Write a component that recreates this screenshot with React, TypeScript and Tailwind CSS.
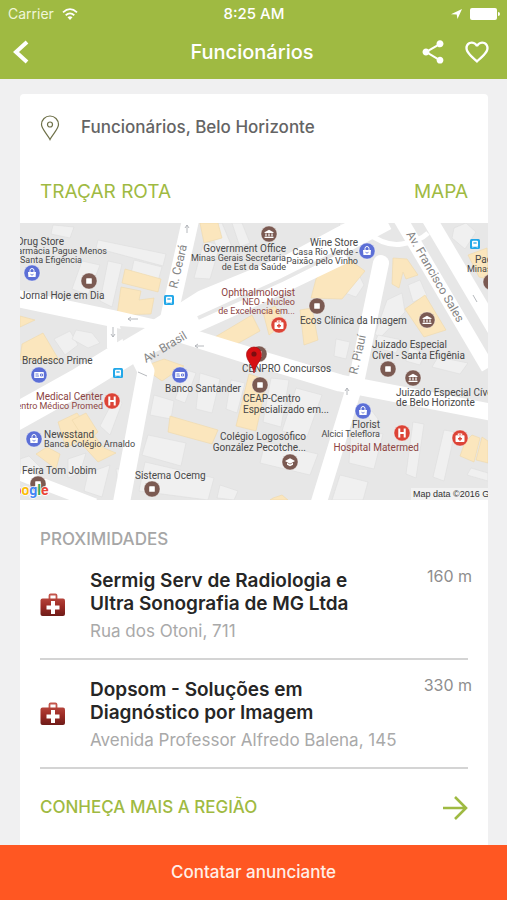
import React from "react";
import { MdShare, MdFavoriteBorder } from "react-icons/md";

type Kind = "bag" | "card" | "square" | "civic" | "school" | "medical" | "hospital";

const PIN_COLOR: Record<Kind, string> = {
  bag: "#5c6fd6",
  card: "#5c6fd6",
  square: "#7b5a52",
  civic: "#7b5a52",
  school: "#7b5a52",
  medical: "#dc4437",
  hospital: "#dc4437",
};

const MARKERS: [number, number, Kind][] = [
  [12, 50, "bag"],
  [347, 28, "bag"],
  [14, 216, "bag"],
  [343, 188, "bag"],
  [160, 152, "card"],
  [19, 152, "card"],
  [69, 58, "square"],
  [297, 83, "square"],
  [240, 162, "square"],
  [368, 146, "square"],
  [132, 266, "square"],
  [239, 131, "square"],
  [18, 261, "square"],
  [249, 11, "civic"],
  [407, 97, "civic"],
  [393, 155, "civic"],
  [471, 59, "square"],
  [270, 239, "school"],
  [259, 102, "medical"],
  [440, 215, "medical"],
  [92, 178, "hospital"],
  [382, 210, "hospital"],
];

const TRANSIT: [number, number][] = [
  [149, 77],
  [98, 150],
  [455, 21],
];

type Anchor = "start" | "middle" | "end";
const LABELS: [string, number, number, 9 | 10, Anchor, ("red" | "dark")?][] = [
  ["Drug Store", -3, 22, 10, "start"],
  ["Farmácia Pague Menos", 87, 31, 9, "end"],
  ["Santa Efigência", 0, 40, 9, "start"],
  ["Jornal Hoje em Dia", 0, 76, 10, "start"],
  ["Government Office", 266, 29, 10, "end"],
  ["Minas Gerais Secretaria", 266, 38, 9, "end"],
  ["de Est da Saúde", 266, 47, 9, "end"],
  ["Wine Store", 338, 23, 10, "end"],
  ["Casa Rio Verde -", 338, 32, 9, "end"],
  ["Paixão pelo Vinho", 338, 41, 9, "end"],
  ["Ophthalmologist", 275, 73, 10, "end", "red"],
  ["NEO - Nucleo", 275, 82, 9, "end", "red"],
  ["de Excelencia em...", 275, 91, 9, "end", "red"],
  ["Ecos Clínica da Imagem", 280, 101, 10, "start"],
  ["Padaria", 455, 40, 10, "start"],
  ["Minas", 447, 49, 9, "start"],
  ["Juizado Especial", 352, 125, 10, "start"],
  ["Cível - Santa Efigênia", 352, 136, 10, "start"],
  ["Juizado Especial Cível", 376, 173, 10, "start"],
  ["de Belo Horizonte", 376, 183, 10, "start"],
  ["Bradesco Prime", 2, 141, 10, "start"],
  ["Medical Center", 83, 177, 10, "end", "red"],
  ["Centro Médico Promed", 83, 186, 9, "end", "red"],
  ["Newsstand", 24, 215, 10, "start"],
  ["Banca Colégio Arnaldo", 24, 224, 9, "start"],
  ["Feira Tom Jobim", 2, 251, 10, "start"],
  ["Sistema Ocemg", 115, 256, 10, "start"],
  ["Banco Santander", 221, 169, 10, "end"],
  ["CENPRO Concursos", 222, 149, 10, "start"],
  ["CEAP-Centro", 223, 179, 10, "start"],
  ["Especializado em...", 223, 190, 10, "start"],
  ["Colégio Logosófico", 286, 217, 10, "end"],
  ["González Pecotche...", 286, 228, 10, "end"],
  ["Florist", 360, 205, 10, "end"],
  ["Alcici Teleflora", 360, 214, 9, "end"],
  ["Hospital Matermed", 399, 228, 10, "end", "red"],
];

const GREY_BLOCKS = [
  "33,2 54,4 50,15 31,11",
  "78,17 146,31 143,43 76,25",
  "114,37 142,44 138,58 111,51",
  "62,38 80,42 68,72 52,66",
  "88,38 102,41 92,84 80,78",
  "34,116 50,108 58,122 45,132",
  "56,107 72,110 80,120 68,125 52,116",
  "174,55 184,18 200,22 190,56",
  "188,2 202,0 212,24 198,28",
  "212,0 222,0 230,20 220,24",
  "320,0 332,0 326,14 318,10",
  "325,55 338,50 344,62 336,74 325,70",
  "388,62 400,57 407,73 393,79",
  "367,77 382,70 385,89 360,115 355,111",
  "434,5 446,0 456,9 445,26 432,15",
  "316,116 330,119 326,136 314,133",
  "358,112 382,117 376,130 353,124",
  "166,147 176,150 165,180 155,176",
  "180,150 200,156 192,190 176,186",
  "211,157 225,160 217,190 206,186",
  "251,155 269,157 261,204 243,199",
  "276,165 302,172 287,214 262,208",
  "134,172 154,178 151,196 130,192",
  "128,212 166,220 161,243 122,232",
  "96,246 112,246 108,262 98,260",
  "125,239 194,255 188,277 119,268",
  "80,203 96,172 102,180 90,212",
  "68,250 90,242 82,274 64,268",
  "48,236 66,230 60,250 48,255",
  "245,219 298,231 290,252 240,240",
  "331,205 363,211 354,246 329,240",
  "346,190 352,188 358,196 355,204",
  "393,199 404,201 396,255 386,251",
  "424,207 435,209 424,258 413,254",
  "451,245 468,250 468,258 447,252",
  "0,236 9,233 22,246 8,262 0,258",
  "418,134 448,140 440,151 412,144",
  "389,124 405,130 400,142 386,138",
  "320,252 348,259 343,277 312,277",
  "200,262 218,268 214,277 197,275",
];

const SAND_BLOCKS = [
  "105,46 141,56 138,69 102,60",
  "101,64 121,68 119,77 134,75 131,91 97,92",
  "0,93 15,97 0,104",
  "2,121 23,110 39,137 0,137",
  "180,0 198,0 202,15 184,20",
  "195,114 232,92 240,108 215,122",
  "296,56 317,28 345,48 322,76 291,75",
  "243,89 255,83 265,100 249,112",
  "373,35 387,36 398,52 386,56 383,49 379,65 372,61",
  "385,86 405,72 426,107 404,114",
  "448,32 467,25 468,56 459,54",
  "280,87 292,85 298,117 284,122",
  "38,199 57,190 84,225 96,230 78,239 59,218 46,225",
  "27,224 40,231 36,246 16,231",
  "150,193 198,207 192,221 148,209",
  "229,151 247,157 236,208 216,203",
  "122,144 144,136 164,143 142,158",
  "445,219 452,212 460,215 454,239 440,233",
  "462,214 468,218 468,240 456,237",
  "253,275 262,272 268,277 250,277",
  "52,197 66,190 78,209 66,219",
];

function Marker({ x, y, kind }: { x: number; y: number; kind: Kind }) {
  const color = PIN_COLOR[kind];
  return (
    <g transform={`translate(${x} ${y})`}>
      <circle r="8" fill={color} stroke="#fff" strokeOpacity=".5" strokeWidth=".7" />
      {kind === "square" && <rect x="-2.8" y="-2.8" width="5.6" height="5.6" rx=".6" fill="#fff" />}
      {kind === "bag" && (
        <g fill="none" stroke="#fff">
          <path d="M-4-1H4L3.6 4H-3.6Z" fill="#fff" stroke="none" />
          <path d="M-2-1V-2.5A2 2 0 0 1 2-2.5V-1" strokeWidth="1" />
          <path d="M-1.5 1.3Q0 3 1.5 1.3" stroke={color} strokeWidth=".9" />
        </g>
      )}
      {kind === "card" && (
        <g>
          <rect x="-4.8" y="-3" width="9.6" height="6" rx=".6" fill="#fff" />
          <path d="M-3.5-1H-.5M-3.5 1H0M1.5-1H3.5V1H1.5Z" stroke={color} strokeWidth=".9" fill="none" />
        </g>
      )}
      {kind === "civic" && (
        <path
          d="M-4.5-1.8 0-4.3 4.5-1.8V-1H-4.5ZM-3.6-.5H-2.4V2.3H-3.6ZM-.6-.5H.6V2.3H-.6ZM2.4-.5H3.6V2.3H2.4ZM-4.5 2.8H4.5V4H-4.5Z"
          fill="#fff"
        />
      )}
      {kind === "school" && <path d="M-5-1 0-3.7 5-1 0 1.7ZM-3 .8 0 2.5 3 .8V2.8L0 4.3-3 2.8Z" fill="#fff" />}
      {kind === "medical" && (
        <g>
          <path d="M-1.7-2.7V-4H1.7V-2.7" fill="none" stroke="#fff" strokeWidth="1.1" />
          <rect x="-4.5" y="-2.8" width="9" height="6.8" rx=".8" fill="#fff" />
          <path d="M0-1.3V2.7M-2 .7H2" stroke={color} strokeWidth="1.4" />
        </g>
      )}
      {kind === "hospital" && <path d="M-2.7-4.5V4.5M2.7-4.5V4.5M-2.7 0H2.7" stroke="#fff" strokeWidth="2" />}
    </g>
  );
}

function RegionMap() {
  return (
    <svg
      viewBox="0 0 468 277"
      preserveAspectRatio="xMidYMid slice"
      className="block w-full overflow-hidden font-[Roboto,sans-serif]"
      role="img"
      aria-label="Mapa de Funcionários, Belo Horizonte"
    >
      <rect width="468" height="277" fill="#e7e7e7" />
      <g fill="#f0f0f0" stroke="#dedede" strokeWidth=".6">
        {GREY_BLOCKS.map((points) => (
          <polygon key={points} points={points} />
        ))}
      </g>
      <g fill="#fbe6bd" stroke="#efd9ab" strokeWidth=".6">
        {SAND_BLOCKS.map((points) => (
          <polygon key={points} points={points} />
        ))}
      </g>
      <g fill="none" stroke="#fff" strokeLinejoin="round">
        <path d="M-5 75 95 96 160 111 240 136 320 160 475 190" strokeWidth="17" />
        <path d="M-10 197 60 158 125 118 185 80 270 45 320 18 365-6" strokeWidth="27" />
        <path d="M110 130 170 102 250 66 325 30" strokeWidth="20" />
        <path d="M171-5 148 98" strokeWidth="17" />
        <path d="M92 90V125" strokeWidth="10" />
        <path d="M118 132 126 148 101 282" strokeWidth="17" />
        <path d="M361 40 337 155 298 282" strokeWidth="16" strokeLinecap="round" />
        <path d="M378-8 468 145" strokeWidth="14" />
        <path d="M407-8 475 107" strokeWidth="15" />
        <path d="M345 8Q365 24 382 21 400 18 408 10" strokeWidth="5" />
        <path d="M0 252 75 281" strokeWidth="11" />
      </g>
      <path d="M178 95 262 57 322 27" fill="none" stroke="#e7e7e7" strokeWidth="4" />
      <polygon points="100,103 125,105 103,118" fill="#e7e7e7" />
      <g fill="none" stroke="#aeb1b6" strokeWidth=".9">
        <path d="M118 96H108M111 94 108 96 111 98M93 104V114M91 111 93 114 95 111M184 123H175M178 121 175 123 178 125" />
        <path d="M167 10V2M165 5 167 2 169 5M327 172V165M325 168 327 165 329 168M453 72 457 79M118 149 127 153" />
      </g>

      <g fontSize="12" fill="#858585">
        <text transform="translate(157 66) rotate(-77)">R. Ceará</text>
        <text transform="translate(126 140) rotate(-31)">Av. Brasil</text>
        <text transform="translate(337 152) rotate(-77)">R. Piauí</text>
        <text transform="translate(386 11) rotate(60)">Av. Francisco Sales</text>
      </g>

      {TRANSIT.map(([x, y]) => (
        <g key={`${x}-${y}`} transform={`translate(${x} ${y})`}>
          <rect x="-5" y="-5" width="10" height="10" rx="1.5" fill="#22a7e8" />
          <rect x="-3" y="-3.3" width="6" height="6" rx="1" fill="#fff" />
          <path d="M-2-2H2V0H-2ZM-2.2 2.5V3.8M2.2 2.5V3.8" fill="#22a7e8" stroke="#fff" strokeWidth=".7" />
        </g>
      ))}
      {MARKERS.map(([x, y, kind]) => (
        <Marker key={`${x}-${y}`} x={x} y={y} kind={kind} />
      ))}
      {LABELS.map(([text, x, y, size, anchor, tone]) => (
        <text
          key={text}
          x={x}
          y={y}
          fontSize={size}
          textAnchor={anchor}
          fill={tone === "red" ? "#8d4543" : "#484848"}
        >
          {text}
        </text>
      ))}

      <path
        d="M234 150C233 142 226.500 138 226.500 131.500A7.500 7.500 0 0 1 241.500 131.500C241.500 138 235 142 234 150Z"
        fill="#d60f12"
        stroke="#a80c0e"
        strokeWidth=".7"
      />
      <circle cx="234" cy="131" r="2.600" fill="#7c0d10" />

      <text x="-16" y="272" fontSize="14" fontWeight="700" stroke="#fff" strokeWidth="1.500" paintOrder="stroke">
        <tspan fill="#4285f4">G</tspan>
        <tspan fill="#ea4335">o</tspan>
        <tspan fill="#fbbc05">o</tspan>
        <tspan fill="#4285f4">g</tspan>
        <tspan fill="#34a853">l</tspan>
        <tspan fill="#ea4335">e</tspan>
      </text>
      <rect x="391" y="265" width="77" height="12" fill="#f5f5f5" fillOpacity=".8" />
      <text x="393" y="274" fontSize="9" fill="#333" className="font-[Liberation_Sans,sans-serif]">
        Map data ©2016 Google
      </text>
    </svg>
  );
}

function FirstAidIcon() {
  return (
    <svg viewBox="0 0 26 24" className="h-6 w-[26px]" aria-hidden="true">
      <defs>
        <linearGradient id="case-red" x1="0" y1="0" x2="0" y2="1">
          <stop offset="0" stopColor="#b5433a" />
          <stop offset=".45" stopColor="#9c2b25" />
          <stop offset="1" stopColor="#6e1c19" />
        </linearGradient>
      </defs>
      <path d="M9.500 6V2.600Q9.500 1.500 10.600 1.500H15.400Q16.500 1.500 16.500 2.600V6" fill="none" stroke="#c4564c" strokeWidth="1.800" />
      <rect x=".5" y="5.500" width="24.500" height="17.500" rx="2" fill="url(#case-red)" />
      <path d="M13 8V21M6.500 14.500H19.500" stroke="#fff" strokeWidth="4" />
    </svg>
  );
}

interface Place {
  name: string;
  address: string;
  distance: string;
}

const PLACES: Place[] = [
  { name: "Sermig Serv de Radiologia e Ultra Sonografia de MG Ltda", address: "Rua dos Otoni, 711", distance: "160 m" },
  { name: "Dopsom - Soluções em Diagnóstico por Imagem", address: "Avenida Professor Alfredo Balena, 145", distance: "330 m" },
];

function PlaceRow({ place }: { place: Place }) {
  return (
    <li className="flex h-[109px] border-b-2 border-[#d4d4d4]">
      <div className="w-[50px] shrink-0 pt-[42px]">
        <FirstAidIcon />
      </div>
      <div className="min-w-0 flex-1 pt-[18px]">
        <h3 className="w-[270px] text-[19px] leading-[23px] font-semibold text-[#262626]">{place.name}</h3>
        <p className="mt-1 text-[17px] leading-6 whitespace-nowrap text-[#a9a9a9]">{place.address}</p>
      </div>
      <span className="-mr-1 pt-[13px] text-base leading-6 whitespace-nowrap text-[#8e8e8e]">{place.distance}</span>
    </li>
  );
}

export default function App() {
  return (
    <div className="flex h-screen flex-col overflow-hidden bg-[#f0f0f1] font-[Inter,sans-serif]">
      <header className="h-[79px] shrink-0 bg-[#9fba42] text-white">
        <div className="grid h-7 grid-cols-3 items-center pr-[7px] pl-2 text-sm">
          <div className="flex items-center gap-2 text-[#f0f6d8]">
            <span>Carrier</span>
            <svg viewBox="0 0 16 12" className="h-3 w-4" fill="none" stroke="#fff" strokeWidth="1.800" aria-hidden="true">
              <path d="M1 4.300Q8-2 15 4.300M3.700 7.200Q8 3.500 12.300 7.200" />
              <path d="M5.500 9.300Q8 7 10.500 9.300L8 12Z" fill="#fff" stroke="none" />
            </svg>
          </div>
          <span className="text-center text-[15px] font-medium">8:25 AM</span>
          <div className="flex items-center justify-end gap-2">
            <svg viewBox="0 0 11 10" className="h-[10px] w-[11px]" fill="#fff" aria-hidden="true">
              <path d="M0 5.200 11 0 6.500 10 5.700 5.400Z" />
            </svg>
            <svg viewBox="0 0 30 12" className="h-3 w-[30px]" fill="#fff" aria-hidden="true">
              <rect width="27" height="12" rx="2" />
              <path d="M28 4Q30 4 30 6T28 8Z" />
            </svg>
          </div>
        </div>
        <div className="grid h-12 grid-cols-[1fr_auto_1fr] items-center pr-4 pl-[13px]">
          <button type="button" aria-label="Voltar" className="justify-self-start">
            <svg viewBox="0 0 16 24" className="h-6 w-4" fill="none" stroke="#fff" strokeWidth="4" aria-hidden="true">
              <path d="M14 2 3 12 14 22" />
            </svg>
          </button>
          <h1 className="text-xl font-medium">Funcionários</h1>
          <div className="flex items-center justify-end gap-4">
            <button type="button" aria-label="Compartilhar">
              <MdShare className="size-7" />
            </button>
            <button type="button" aria-label="Favoritar">
              <MdFavoriteBorder className="size-7" />
            </button>
          </div>
        </div>
      </header>

      <main className="min-h-0 flex-1 overflow-hidden pt-[15px] pr-[19px] pl-5">
        <section className="min-h-full rounded-t bg-white">
          <div className="flex h-[67px] items-center gap-[21px] px-5">
            <svg viewBox="0 0 20 26" className="h-[26px] w-5" fill="none" stroke="#6e7048" strokeWidth="1.200" aria-hidden="true">
              <path d="M10 24.500C8 20 1.500 14 1.500 9.500A8.500 8.500 0 0 1 18.500 9.500C18.500 14 12 20 10 24.500Z" />
              <circle cx="10" cy="9.500" r="2.500" />
            </svg>
            <p className="text-[17px] font-medium text-[#646464]">Funcionários, Belo Horizonte</p>
          </div>
          <div className="flex h-[62px] items-center justify-between px-5 text-[19px] text-[#9fba42]">
            <button type="button">TRAÇAR ROTA</button>
            <button type="button">MAPA</button>
          </div>
          <RegionMap />
          <div className="px-5">
            <h2 className="pt-[27px] text-[17px] leading-6 font-medium text-[#a6a6a6]">PROXIMIDADES</h2>
            <ul>
              {PLACES.map((place) => (
                <PlaceRow key={place.name} place={place} />
              ))}
            </ul>
            <a href="#regiao" className="flex h-[78px] items-center justify-between text-[17px] font-medium text-[#9fba42]">
              <span>CONHEÇA MAIS A REGIÃO</span>
              <svg viewBox="0 0 26 24" className="h-6 w-[26px]" fill="none" stroke="currentColor" strokeWidth="2.600" aria-hidden="true">
                <path d="M1 12H24M13 1 24 12 13 23" />
              </svg>
            </a>
          </div>
        </section>
      </main>

      <button type="button" className="h-[55px] shrink-0 bg-[#ff5722] text-[17px] font-medium text-[#ffefe8]">
        Contatar anunciante
      </button>
    </div>
  );
}
